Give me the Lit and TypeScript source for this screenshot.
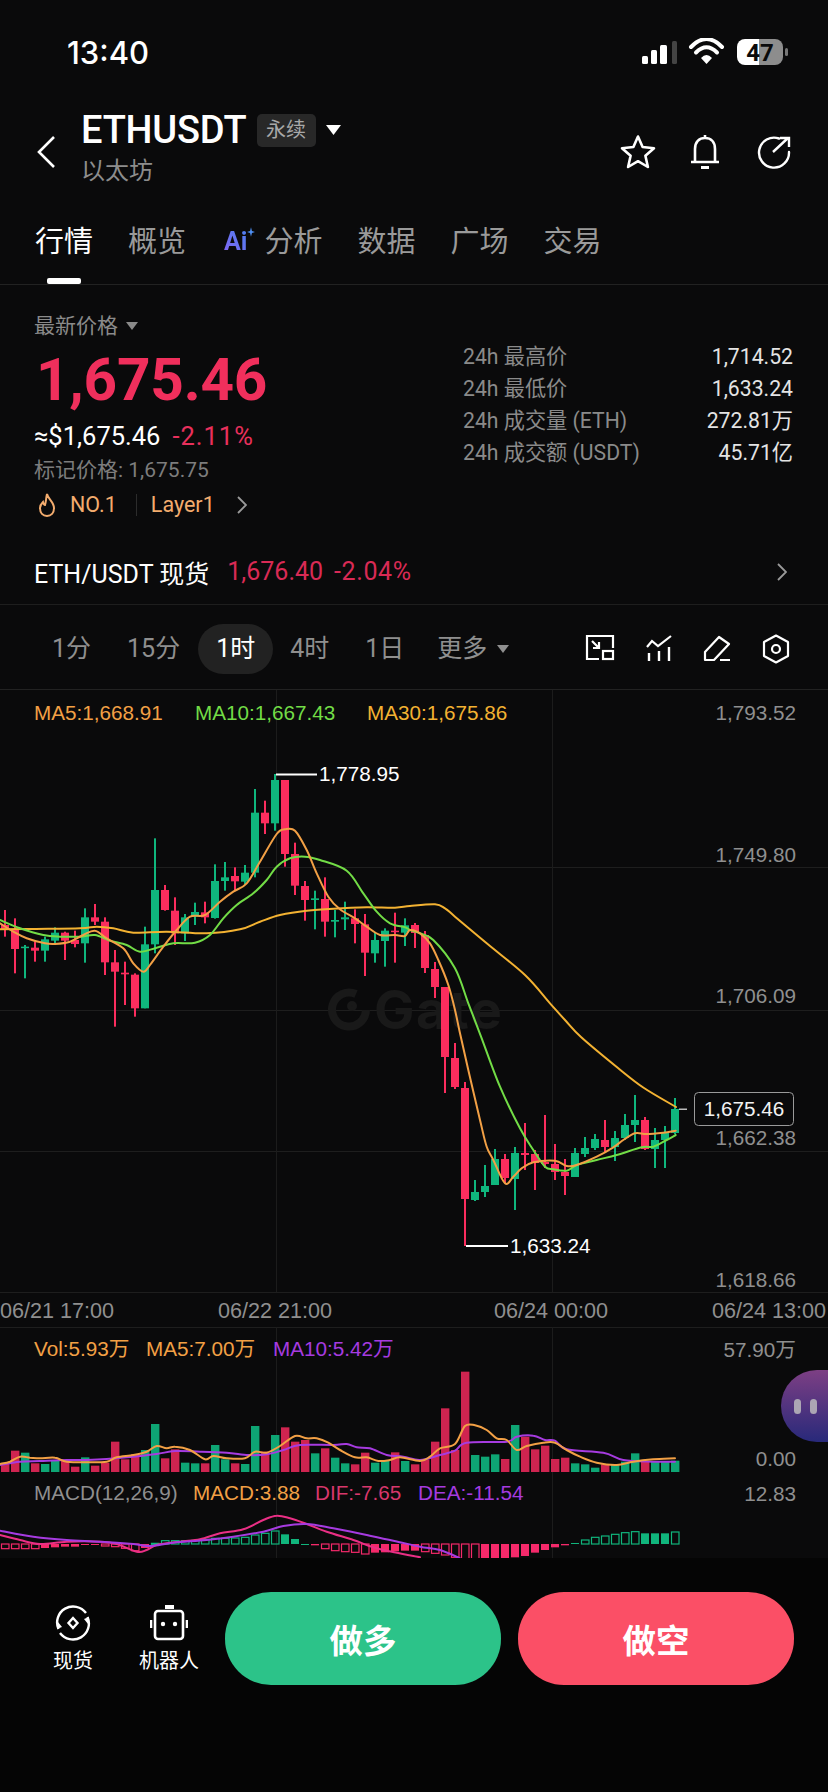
import { LitElement, html, css, svg } from "lit";
import { customElement } from "lit/decorators.js";

const RED = "#fb2d5e";
const GREEN = "#0fb67d";
const ORANGE = "#f2a045";
const LIME = "#72dc46";
const GOLD = "#f3b232";
const VIOLET = "#a63be0";

type C = [number, number, number, number];
// first 41 candles, read in a crop whose y = 680 + v/3
const leftC: [string, ...C][] = [
  ["r",690,735,750,770],["r",715,748,807,880],["g",795,800,803,895],["r",785,803,812,845],
  ["g",770,778,812,845],["g",742,758,782,795],["r",755,758,782,840],["r",752,780,792,802],
  ["g",685,712,790,848],["r",672,712,725,735],["r",712,725,847,885],["r",810,847,875,1040],
  ["r",845,878,883,975],["r",880,884,985,1010],["g",740,793,985,985],["g",475,630,793,820],
  ["r",615,630,690,692],["r",652,692,760,795],["g",702,712,760,783],["g",668,696,710,735],
  ["r",665,697,712,730],["g",553,603,714,716],["g",546,592,603,632],["r",562,588,604,630],
  ["g",555,578,605,612],["g",327,398,578,592],["r",362,398,430,462],["g",282,300,430,452],
  ["r",300,300,522,560],["r",488,522,617,645],["r",603,618,660,722],["g",632,655,660,748],
  ["r",592,657,725,770],["g",690,720,725,772],["g",665,712,718,750],["r",688,715,732,790],
  ["r",702,733,818,888],["g",758,780,820,848],["g",745,752,783,860],["r",698,752,756,848],
  ["g",715,736,758,798],
];
// remaining candles, page y
const rightC: [string, ...C][] = [
  ["r",923,925,933,948],["r",931,935,968,973],["r",962,969,987,998],["r",987,987,1057,1093],
  ["r",1043,1058,1087,1089],["r",1082,1088,1199,1246],["g",1180,1192,1200,1201],["g",1165,1186,1192,1197],
  ["g",1149,1159,1185,1185],["r",1154,1159,1178,1183],["g",1147,1153,1179,1210],["r",1123,1153,1155,1170],
  ["r",1150,1154,1163,1190],["r",1115,1162,1164,1168],["r",1144,1164,1172,1180],["r",1159,1172,1176,1195],
  ["g",1148,1153,1177,1177],["g",1137,1148,1154,1157],["g",1134,1139,1148,1150],["r",1120,1140,1147,1152],
  ["g",1131,1138,1147,1161],["g",1114,1125,1138,1140],["g",1095,1120,1125,1142],["r",1117,1120,1149,1150],
  ["g",1128,1140,1149,1168],["g",1126,1133,1140,1168],["g",1098,1109,1133,1134],
];
const candles = [
  ...leftC.map(([t, a, b, c, d]) => [t, 680 + a / 3, 680 + b / 3, 680 + c / 3, 680 + d / 3] as [string, ...C]),
  ...rightC,
];

type P = [number, number];
const tr = (pts: P[], ox: number, oy: number, sx = 3, sy = 3): P[] =>
  pts.map(([x, y]) => [ox + x / sx, oy + y / sy] as P);
// Catmull-Rom through the sampled points, so the averages read as curves
const smooth = (pts: P[]) => {
  const n = (v: number) => v.toFixed(1);
  let d = "M" + n(pts[0][0]) + " " + n(pts[0][1]);
  for (let i = 0; i < pts.length - 1; i++) {
    const p0 = pts[Math.max(i - 1, 0)];
    const p1 = pts[i];
    const p2 = pts[i + 1];
    const p3 = pts[Math.min(i + 2, pts.length - 1)];
    d += " C" + n(p1[0] + (p2[0] - p0[0]) / 6) + " " + n(p1[1] + (p2[1] - p0[1]) / 6) +
      " " + n(p2[0] - (p3[0] - p1[0]) / 6) + " " + n(p2[1] - (p3[1] - p1[1]) / 6) +
      " " + n(p2[0]) + " " + n(p2[1]);
  }
  return d;
};

const ma5: P[] = [
  ...tr([[0,730],[40,755],[80,775],[135,790],[165,792],[210,785],[250,765],[285,752],[320,775],[370,805],[400,850],[430,875],[450,855],[490,800],[530,750],[570,710],[615,705],[660,665],[700,635],[740,610],[780,545],[830,462],[855,448],[885,452],[920,510],[950,580],[985,650],[1020,688],[1065,715],[1100,740],[1140,765],[1185,765],[1215,768]], 0, 680),
  ...tr([[0,150],[30,160],[60,190],[85,240],[115,315],[135,390],[150,460],[175,570],[210,720],[230,800],[250,840],[285,910],[310,890],[335,865],[370,847]], 410, 880),
  ...tr([[315,302],[350,318],[380,315],[440,290],[490,262],[520,240],[555,220],[590,222],[640,218],[677,212]], 450, 1060),
];
const ma10: P[] = [
  ...tr([[0,720],[60,745],[130,765],[180,770],[240,770],[285,765],[330,782],[380,795],[420,815],[470,803],[520,790],[585,788],[630,765],[670,715],[710,675],[760,640],[800,600],[830,560],[870,535],[915,530],[960,540],[1040,572],[1090,640],[1130,695],[1170,730],[1215,742]], 0, 680),
  ...tr([[0,150],[30,160],[70,180],[135,265],[175,370],[215,475],[270,620],[330,745],[370,810],[405,860]], 410, 880),
  ...tr([[310,328],[350,332],[380,315],[440,300],[500,285],[575,262],[610,260],[650,240],[677,225]], 450, 1060),
];
const ma30: P[] = [
  ...tr([[0,748],[100,747],[240,745],[290,740],[340,745],[400,758],[500,755],[620,760],[720,748],[780,725],[840,705],[920,692],[1000,686],[1100,682],[1185,683]], 0, 680),
  ...tr([[0,78],[75,73],[105,85],[135,110],[230,190],[345,285],[420,370]], 410, 880),
  [565, 1020], [581, 1037], [618, 1068], [644, 1088], [676, 1107],
];

// volume bars: top read in crops, y = 1320 + v/3
const vol: [string, number][] = [
  ["r",430],["r",392],["g",398],["r",430],["g",432],["g",422],["r",420],["r",440],["g",412],["r",437],
  ["r",428],["r",365],["r",418],["r",403],["g",390],["g",312],["r",415],["r",388],["g",428],["g",430],
  ["r",430],["g",375],["g",418],["r",430],["g",432],["g",318],["r",395],["g",345],["r",322],["r",365],
  ["r",360],["g",400],["r",385],["g",413],["g",430],["r",433],["r",398],["g",428],["g",422],["r",397],
  ["g",423],["r",433],
  ["r",418],["r",365],["r",265],["r",390],["r",155],["g",405],["g",410],["g",403],["r",417],["g",315],
  ["r",350],["r",388],["r",377],["r",417],["r",413],["g",430],["g",433],["g",443],["r",433],["g",435],
  ["g",425],["g",400],["r",425],["g",423],["g",425],["g",422],
];
const volO: P[] = [
  ...tr([[0,432],[30,425],[60,410],[90,413],[120,415],[165,413],[200,425],[260,427],[320,425],[350,412],[400,405],[440,395],[470,378],[500,385],[525,380],[570,390],[615,418],[640,408],[680,415],[735,415],[765,395],[800,398],[840,378],[885,348],[920,355],[950,355],[985,368],[1020,390],[1065,412],[1100,412],[1135,423],[1170,420],[1200,412],[1260,423]], 0, 1320).slice(0, 34),
  ...tr([[30,410],[60,385],[105,372],[135,318],[165,316],[200,330],[230,355],[260,360],[290,390],[320,378],[370,368],[405,368],[440,390],[480,410],[530,428],[590,435],[640,425],[700,418],[765,415]], 420, 1320),
];
const volP: P[] = [
  ...tr([[0,435],[60,425],[120,423],[200,420],[260,420],[320,417],[400,410],[470,402],[525,393],[600,395],[680,398],[745,405],[800,403],[850,390],[900,375],[1000,375],[1040,372],[1070,382],[1110,385],[1160,405],[1210,410],[1260,420]], 0, 1320),
  ...tr([[60,405],[105,392],[140,368],[260,365],[290,350],[340,347],[375,360],[405,362],[440,388],[550,398],[610,420],[700,425],[765,425]], 420, 1320),
];

// MACD histogram: [colour, end value, filled]
const macd: [string, number, number][] = [
  ["r",686,0],["r",686,0],["r",686,0],["r",686,0],["r",684,1],["r",682,1],["r",680,1],["r",680,1],["r",675,1],["r",673,1],
  ["r",678,0],["r",680,0],["r",685,0],["r",692,0],["r",684,1],["g",670,0],["g",662,0],["g",662,0],["g",662,0],["g",661,0],
  ["g",658,0],["g",655,0],["g",655,0],["g",654,0],["g",652,0],["g",645,0],["g",640,0],["g",633,0],["g",643,1],["g",657,1],
  ["g",672,1],["r",676,1],["r",686,0],["r",692,0],["r",695,0],["r",697,0],["r",702,0],["r",698,1],["r",697,1],["r",694,1],
  ["r",692,1],["r",692,1],
  ["r",695,0],["r",700,0],["r",705,0],["r",712,0],["r",716,0],["r",716,0],["r",716,1],["r",716,1],["r",716,1],["r",712,1],
  ["r",708,1],["r",698,1],["r",690,1],["r",682,1],["r",676,1],["g",669,1],["g",660,0],["g",652,0],["g",648,0],["g",643,0],
  ["g",638,0],["g",635,0],["g",640,1],["g",640,1],["g",640,1],["g",636,0],
];
const dif: P[] = [
  ...tr([[0,645],[60,660],[120,672],[200,665],[300,665],[350,672],[410,695],[440,690],[470,675],[540,665],[600,658],[660,640],[730,628],[790,600],[830,587],[870,595],[920,612],[980,635],[1060,660],[1100,675],[1150,690],[1260,712]], 0, 1320),
];
const dea: P[] = [
  ...tr([[0,632],[100,650],[200,660],[300,665],[400,672],[450,678],[520,668],[620,660],[700,650],[790,635],[850,618],[920,612],[1000,625],[1100,645],[1180,662],[1260,680]], 0, 1320),
  ...tr([[60,690],[120,715]], 420, 1320),
];

@customElement("app-root")
export class AppRoot extends LitElement {
  static styles = css`
    :host {
      display: block;
      position: relative;
      width: 828px;
      height: 1792px;
      overflow: hidden;
      background: #0a0a0b;
      color: #fff;
      font-family: Roboto, "Noto Sans CJK SC", sans-serif;
    }
    svg { display: block; }
    .status {
      height: 90px;
      box-sizing: border-box;
      padding: 33px 38px 0 67px;
      display: flex;
      justify-content: space-between;
      align-items: flex-start;
    }
    .time { font: 500 31px/40px Inter, sans-serif; }
    .status svg { margin-top: 5px; }
    .status text { font: 700 24px Roboto, sans-serif; }
    .head {
      height: 110px;
      box-sizing: border-box;
      padding: 20px 37px 0 37px;
      display: flex;
      align-items: flex-start;
    }
    .back { margin: 26px 26px 0 0; }
    .titles { flex: 1; }
    .titlerow { display: flex; align-items: center; height: 40px; }
    .sym { font-size: 38px; line-height: 40px; font-weight: 500; letter-spacing: -0.2px; }
    .tag {
      margin-left: 10px;
      width: 59px;
      height: 33px;
      border-radius: 5px;
      background: #282828;
      color: #a8a8a8;
      font-size: 20px;
      line-height: 33px;
      text-align: center;
    }
    .caret { margin-left: 10px; }
    .sub { margin-top: 5px; font-size: 24px; line-height: 33px; color: #8d8d8d; }
    .actions { display: flex; margin-top: 24px; align-items: center; }
    .actions .bell { margin: 0 37px 0 34px; }
    .tabs {
      height: 85px;
      box-sizing: border-box;
      padding: 0 0 0 35px;
      display: flex;
      gap: 35px;
      align-items: flex-start;
      border-bottom: 1px solid #222;
      font-size: 29px;
      line-height: 84px;
      color: #9a9a9a;
    }
    .tab { position: relative; height: 84px; display: flex; align-items: flex-start; }
    .tab.on { color: #fff; }
    .tab.on::after {
      content: "";
      position: absolute;
      left: 12px;
      bottom: 0;
      width: 34px;
      height: 6px;
      border-radius: 2px;
      background: #fff;
    }
    .ai {
      margin-left: 3px;
      font: 700 25px/84px Roboto, sans-serif;
      background: linear-gradient(45deg, #a652ee, #4f7ff2 70%);
      -webkit-background-clip: text;
      background-clip: text;
      color: transparent;
    }
    .spark { margin: 26px 0 0 0; }
    .aitext { margin-left: 9px; }
    .info { display: flex; height: 244px; box-sizing: border-box; padding: 26px 35px 0 34px; }
    .left { flex: 1; }
    .lbl { display: flex; align-items: center; gap: 8px; font-size: 21px; line-height: 30px; color: #8a8a8a; }
    .price { margin-top: 8px; margin-left: 2px; font-size: 58.5px; line-height: 62px; font-weight: 700; color: #f02f5c; letter-spacing: -0.2px; }
    .usd { margin-top: 10px; font-size: 25.5px; line-height: 30px; display: flex; gap: 12px; }
    .usd .down { letter-spacing: 1px; }
    .down { color: #e8305c; }
    .mark { margin-top: 5px; font-size: 21px; line-height: 28px; color: #7d7d7d; }
    .rank { margin-top: 6px; display: flex; align-items: center; font-size: 21.5px; line-height: 30px; color: #f3ac6e; }
    .rank .sep { width: 1px; height: 22px; background: #2c2c2c; margin: 0 14px 0 19px; }
    .rank .no { margin-left: 14px; }
    .rank .chev { margin-left: 22px; }
    .rank .fl { margin-left: 4px; }
    .stats { width: 330px; padding-top: 30px; font-size: 21.2px; line-height: 32px; }
    .stat { display: flex; justify-content: space-between; color: #8a8a8a; }
    .stat b { font-weight: 400; color: #e4e4e4; }
    .spot {
      height: 76px;
      box-sizing: border-box;
      padding: 10px 41px 0 34px;
      display: flex;
      align-items: center;
      border-bottom: 1px solid #1e1e1e;
      font-size: 25px;
    }
    .spot .n { margin-right: 18px; }
    .spot .d { color: #d92a55; }
    .spot .d + .d { margin-left: 11px; letter-spacing: 0.6px; }
    .spot svg { margin-left: auto; }
    .tf {
      height: 85px;
      box-sizing: border-box;
      padding: 4px 38px 0 34px;
      display: flex;
      align-items: center;
      font-size: 25px;
      color: #8f8f8f;
      border-bottom: 1px solid #222;
    }
    .tf span.i { padding: 0 18px; height: 50px; line-height: 50px; border-radius: 25px; display: flex; align-items: center; gap: 10px; }
    .tf span.on { background: #222; color: #fff; margin-right: -1px; }
    .tf span.more { margin-left: -3px; }
    .tools { margin-left: auto; display: flex; gap: 31px; }
    .charts text { font-family: "Liberation Sans", "Noto Sans CJK SC", sans-serif; font-size: 20.7px; }
    .charts text.date { font-size: 21.6px; }
    .charts text.mark-text { font: 700 54px Inter, sans-serif; letter-spacing: 1.5px; }
    .bottom {
      height: 234px;
      box-sizing: border-box;
      padding: 34px 34px 0 53px;
      display: flex;
      align-items: flex-start;
      background: #050505;
    }
    .act {
      display: flex;
      flex-direction: column;
      align-items: center;
      font-size: 20px;
      line-height: 28px;
      gap: 6px;
      padding-top: 13px;
    }
    .act.a { width: 40px; margin-right: 45px; }
    .act.b { width: 62px; margin-right: 25px; }
    .btn {
      width: 276px;
      height: 93px;
      border-radius: 46px;
      display: flex;
      align-items: center;
      justify-content: center;
      font-size: 33.5px;
      font-weight: 700;
      color: #fff;
    }
    .long { background: #2cc389; margin-right: 17px; }
    .short { background: #fb4f66; }
    .float {
      position: absolute;
      right: 0;
      top: 1370px;
      width: 47px;
      height: 72px;
      border-radius: 36px 0 0 36px;
      background: linear-gradient(180deg, #7d3f84, #28297a);
      display: flex;
      align-items: center;
      gap: 9px;
      padding-left: 13px;
      box-sizing: border-box;
    }
    .float i { width: 7px; height: 15px; border-radius: 4px; background: #aca6b4; }
  `;

  private chart() {
    const grid = [867, 1010, 1151, 1292, 1327, 1558];
    const axis: [string, number][] = [
      ["1,793.52", 713], ["1,749.80", 855], ["1,706.09", 996], ["1,662.38", 1138], ["1,618.66", 1280],
      ["57.90万", 1350], ["0.00", 1459], ["12.83", 1494],
    ];
    const legend: [string, number, string][] = [
      ["MA5:1,668.91", 34, ORANGE], ["MA10:1,667.43", 195, LIME], ["MA30:1,675.86", 367, GOLD],
    ];
    const legend2: [string, number, string][] = [
      ["Vol:5.93万", 34, ORANGE], ["MA5:7.00万", 146, ORANGE], ["MA10:5.42万", 273, VIOLET],
    ];
    const legend3: [string, number, string][] = [
      ["MACD(12,26,9)", 34, "#8f8f8f"], ["MACD:3.88", 193, ORANGE], ["DIF:-7.65", 315, "#d8376c"], ["DEA:-11.54", 418, VIOLET],
    ];
    const dates: [string, number][] = [["06/21 17:00", 0], ["06/22 21:00", 218], ["06/24 00:00", 494], ["06/24 13:00", 712]];
    const txt = (t: string, x: number, cy: number, fill: string, anchor = "start") =>
      svg`<text x=${x} y=${cy + 7} fill=${fill} text-anchor=${anchor}>${t}</text>`;
    const line = (pts: P[], c: string, w = 2) =>
      svg`<path d=${smooth(pts)} fill="none" stroke=${c} stroke-width=${w} stroke-linejoin="round" stroke-linecap="round"/>`;
    return svg`
      <svg class="charts" width="828" height="868" viewBox="0 690 828 868">
        <defs><clipPath id="mc"><rect x="0" y="1500" width="828" height="58"/></clipPath></defs>
        ${grid.map((y) => svg`<rect x="0" y=${y} width="828" height="1" fill="#1e1e1e"/>`)}
        <rect x="276" y="690" width="1" height="602" fill="#1c1c1c"/>
        <rect x="552" y="690" width="1" height="602" fill="#1c1c1c"/>
        <rect x="276" y="1327" width="1" height="231" fill="#1c1c1c"/>
        <rect x="552" y="1327" width="1" height="231" fill="#1c1c1c"/>

        <g fill="none" stroke="#191919" stroke-width="8">
          <path d="M356 994 A17 17 0 1 0 366 1010"/>
          <circle cx="352" cy="1006" r="3" fill="#191919" stroke-width="4"/>
        </g>
        <text class="mark-text" x="374" y="1029" fill="#191919">Gate</text>

        ${candles.map((c, i) => {
          const x = 5 + i * 10;
          const col = c[0] === "r" ? RED : GREEN;
          return svg`<rect x=${x - 1} y=${c[1]} width="2" height=${c[4] - c[1]} fill=${col}/>
            <rect x=${x - 4} y=${c[2]} width="8" height=${Math.max(c[3] - c[2], 1.5)} fill=${col}/>`;
        })}
        ${line(ma30, GOLD)}
        ${line(ma10, LIME)}
        ${line(ma5, ORANGE)}

        <rect x="276" y="773.5" width="41" height="2" fill="#fff"/>
        ${txt("1,778.95", 319, 774, "#fff")}
        <rect x="466" y="1245" width="42" height="2" fill="#fff"/>
        ${txt("1,633.24", 510, 1246, "#fff")}

        <rect x="679" y="1108.5" width="8" height="1.5" fill="#bbb"/>
        <rect x="694.5" y="1092.5" width="99" height="33" rx="4" fill="#0a0a0b" stroke="#9a9a9a"/>
        ${txt("1,675.46", 744, 1109, "#f2f2f2", "middle")}

        ${legend.map((l) => txt(l[0], l[1], 713, l[2]))}
        ${axis.map((a) => txt(a[0], 796, a[1], "#8f8f8f", "end"))}
        ${dates.map((d) => svg`<text class="date" x=${d[1]} y=${1318} fill="#8f8f8f">${d[0]}</text>`)}

        ${legend2.map((l) => txt(l[0], l[1], 1349, l[2]))}
        ${vol.map((v, i) => {
          const y = 1320 + v[1] / 3;
          return svg`<rect x=${1 + i * 10} y=${y} width="8.4" height=${1472 - y} fill=${v[0] === "r" ? "#cf2450" : "#0ea574"}/>`;
        })}
        ${line(volP, VIOLET)}
        ${line(volO, ORANGE)}

        ${legend3.map((l) => txt(l[0], l[1], 1493, l[2]))}
        <g clip-path="url(#mc)">
          ${macd.map((m, i) => {
            const y = 1320 + m[1] / 3;
            const top = Math.min(y, 1544);
            const h = Math.max(Math.abs(y - 1544), 1);
            const col = m[0] === "r" ? "#f4296a" : "#10b57c";
            return m[2]
              ? svg`<rect x=${1 + i * 10} y=${top} width="8" height=${h} fill=${col}/>`
              : svg`<rect x=${1.5 + i * 10} y=${top} width="7.5" height=${h} fill="none" stroke=${col} stroke-width="1.2"/>`;
          })}
          ${line(dif, "#ea2f85")}
          ${line(dea, VIOLET)}
        </g>
      </svg>`;
  }

  render() {
    return html`
      <div class="status">
        <div class="time">13:40</div>
        <svg width="150" height="28" viewBox="640 38 150 28">
          <rect x="642" y="56" width="6" height="8" rx="1.5" fill="#fff"/>
          <rect x="651" y="50" width="6" height="14" rx="1.5" fill="#fff"/>
          <rect x="660" y="45" width="7" height="19" rx="1.5" fill="#fff"/>
          <rect x="672" y="41" width="5" height="23" rx="1.5" fill="#444"/>
          <path d="M691 47 Q706.5 31 722 47" fill="none" stroke="#fff" stroke-width="4" stroke-linecap="round"/>
          <path d="M696 52.5 Q706.5 42 717 52.5" fill="none" stroke="#fff" stroke-width="4" stroke-linecap="round"/>
          <path d="M701 58 Q706.5 52 712 58 L706.5 64 Z" fill="#fff"/>
          <path d="M759 39 H775 a8 8 0 0 1 8 8 V57 a8 8 0 0 1 -8 8 H759 Z" fill="#8d8d8d"/>
          <path d="M759 39 H745 a8 8 0 0 0 -8 8 V57 a8 8 0 0 0 8 8 H759 Z" fill="#fff"/>
          <rect x="785" y="48" width="3" height="8" rx="1.5" fill="#777"/>
          <text x="760" y="60.5" fill="#0a0a0b" text-anchor="middle">47</text>
        </svg>
      </div>

      <div class="head">
        <svg class="back" width="18" height="32" viewBox="0 0 18 32"><path d="M17 1 L2 16 L17 31" fill="none" stroke="#fff" stroke-width="2.6"/></svg>
        <div class="titles">
          <div class="titlerow">
            <span class="sym">ETHUSDT</span>
            <span class="tag">永续</span>
            <svg class="caret" width="15" height="10" viewBox="0 0 15 10"><path d="M0 0 H15 L7.5 10 Z" fill="#fff"/></svg>
          </div>
          <div class="sub">以太坊</div>
        </div>
        <div class="actions">
          <svg width="36" height="36" viewBox="0 0 36 36"><path d="M18 2.5 L22.6 13 L34 14.2 L25.4 21.8 L27.9 33 L18 27.2 L8.1 33 L10.6 21.8 L2 14.2 L13.4 13 Z" fill="none" stroke="#fff" stroke-width="2.6" stroke-linejoin="round"/></svg>
          <svg class="bell" width="30" height="36" viewBox="0 0 30 36"><path d="M15 1 V4 M5 27 V15 C5 8 9 4 15 4 C21 4 25 8 25 15 V27 M1 28 H29" fill="none" stroke="#fff" stroke-width="2.6"/><path d="M11 33.5 H19" stroke="#fff" stroke-width="3"/></svg>
          <svg width="34" height="34" viewBox="0 0 34 34"><path d="M22 3.5 A15 15 0 1 0 32 17" fill="none" stroke="#fff" stroke-width="2.4" stroke-linecap="round"/><path d="M16 17 L31 3 M23 3 H32 V12" fill="none" stroke="#fff" stroke-width="2.4"/></svg>
        </div>
      </div>

      <div class="tabs">
        <div class="tab on">行情</div>
        <div class="tab">概览</div>
        <div class="tab">
          <span class="ai">Ai</span>
          <svg class="spark" width="8" height="12" viewBox="0 0 10 12"><path d="M5 0 L6.2 4.8 L10 6 L6.2 7.2 L5 12 L3.8 7.2 L0 6 L3.8 4.8 Z" fill="#4f8ff2"/></svg>
          <span class="aitext">分析</span>
        </div>
        <div class="tab">数据</div>
        <div class="tab">广场</div>
        <div class="tab">交易</div>
      </div>

      <div class="info">
        <div class="left">
          <div class="lbl">最新价格 <svg width="12" height="8" viewBox="0 0 12 8"><path d="M0 0 H12 L6 8 Z" fill="#8a8a8a"/></svg></div>
          <div class="price">1,675.46</div>
          <div class="usd"><span>≈$1,675.46</span><span class="down">-2.11%</span></div>
          <div class="mark">标记价格: 1,675.75</div>
          <div class="rank">
            <svg class="fl" width="18" height="24" viewBox="0 0 18 24"><path d="M9 1 C10 6 16 9 16 15 C16 20 13 23 9 23 C5 23 2 20 2 15 C2 12 4 10 5 9 C5.5 11 6.5 12 7 12 C8 9 8 5 9 1 Z" fill="none" stroke="#f3ac6e" stroke-width="2"/></svg>
            <span class="no">NO.1</span>
            <span class="sep"></span>
            <span>Layer1</span>
            <svg class="chev" width="10" height="18" viewBox="0 0 10 18"><path d="M1 1 L9 9 L1 17" fill="none" stroke="#9a9a9a" stroke-width="1.8"/></svg>
          </div>
        </div>
        <div class="stats">
          <div class="stat"><span>24h 最高价</span><b>1,714.52</b></div>
          <div class="stat"><span>24h 最低价</span><b>1,633.24</b></div>
          <div class="stat"><span>24h 成交量 (ETH)</span><b>272.81万</b></div>
          <div class="stat"><span>24h 成交额 (USDT)</span><b>45.71亿</b></div>
        </div>
      </div>

      <div class="spot">
        <span class="n">ETH/USDT 现货</span>
        <span class="d">1,676.40</span><span class="d">-2.04%</span>
        <svg width="10" height="18" viewBox="0 0 10 18"><path d="M1 1 L9 9 L1 17" fill="none" stroke="#9a9a9a" stroke-width="1.8"/></svg>
      </div>

      <div class="tf">
        <span class="i">1分</span>
        <span class="i">15分</span>
        <span class="i on">1时</span>
        <span class="i">4时</span>
        <span class="i">1日</span>
        <span class="i more">更多<svg width="12" height="8" viewBox="0 0 12 8"><path d="M0 0 H12 L6 8 Z" fill="#8f8f8f"/></svg></span>
        <div class="tools">
          <svg width="30" height="28" viewBox="0 0 30 28"><path d="M28 14 V2 H2 V25 H14 M7 7 L14 14 M14 8 V14 H8" fill="none" stroke="#fff" stroke-width="2.2"/><rect x="18" y="17" width="10" height="8" fill="none" stroke="#fff" stroke-width="2.2"/></svg>
          <svg width="26" height="28" viewBox="0 0 26 28"><path d="M1 13 L6 7 L12 12 L25 2" fill="none" stroke="#fff" stroke-width="2.2"/><path d="M3 19 V27 M13 17 V27 M23 13 V27" stroke="#fff" stroke-width="2.4" fill="none"/></svg>
          <svg width="28" height="28" viewBox="0 0 28 28"><path d="M2 26 V18 L16 3 L26 10 L11 26 Z M17 26 H27" fill="none" stroke="#fff" stroke-width="2.2" stroke-linejoin="round"/></svg>
          <svg width="28" height="30" viewBox="0 0 28 30"><path d="M14 1.5 L26 8 V22 L14 28.5 L2 22 V8 Z" fill="none" stroke="#fff" stroke-width="2.2" stroke-linejoin="round"/><circle cx="14" cy="15" r="4" fill="none" stroke="#fff" stroke-width="2.2"/></svg>
        </div>
      </div>

      ${this.chart()}

      <div class="float"><i></i><i></i></div>

      <div class="bottom">
        <div class="act a">
          <svg width="36" height="36" viewBox="0 0 36 36">
            <path d="M3.5 24 A16 16 0 0 1 31 8" fill="none" stroke="#fff" stroke-width="2.4"/>
            <path d="M32.5 12 A16 16 0 0 1 5 28" fill="none" stroke="#fff" stroke-width="2.4"/>
            <path d="M18 13 L22.5 18 L18 23 L13.5 18 Z" fill="none" stroke="#fff" stroke-width="2.4"/>
            <path d="M34 12 L29 14 L33 19 Z M2 24 L7 22 L3 17 Z" fill="#fff"/>
          </svg>
          <span>现货</span>
        </div>
        <div class="act b">
          <svg width="38" height="36" viewBox="0 0 38 36">
            <rect x="15" y="0" width="9" height="4" fill="#fff"/>
            <rect x="5" y="6" width="28" height="28" rx="3" fill="none" stroke="#fff" stroke-width="2.6"/>
            <path d="M1 15 V23 M37 15 V23" stroke="#fff" stroke-width="2.6" fill="none"/>
            <circle cx="13" cy="19" r="2.2" fill="#fff"/><circle cx="25" cy="19" r="2.2" fill="#fff"/>
          </svg>
          <span>机器人</span>
        </div>
        <div class="btn long">做多</div>
        <div class="btn short">做空</div>
      </div>
    `;
  }
}
